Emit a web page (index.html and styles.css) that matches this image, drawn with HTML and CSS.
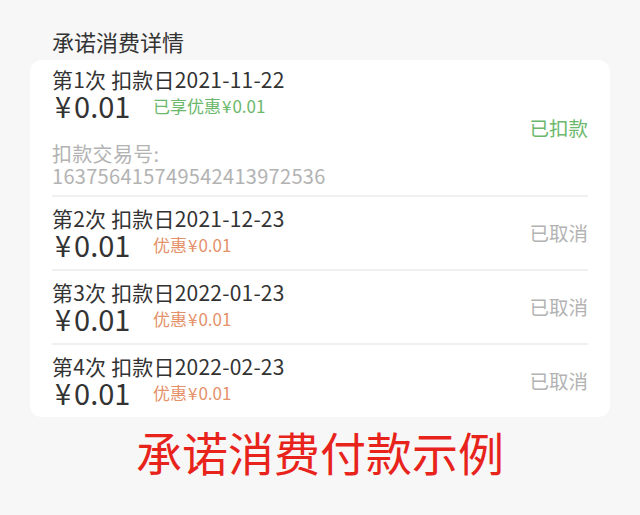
FILE: index.html
```html
<!DOCTYPE html>
<html lang="zh-CN">
  <head>
    <meta charset="UTF-8" />
    <meta name="viewport" content="width=device-width, initial-scale=1.0" />
    <title>承诺消费详情</title>
    <link rel="stylesheet" href="styles.css">
  </head>
  <body>
    <h2 class="page-title">承诺消费详情</h2>

    <!-- Payment list -->
    <div class="card">
      <div class="row row-first">
        <div class="info">
          <div class="date">第1次 扣款日2021-11-22</div>
          <div class="amount-line">
            <span class="amount"><span class="yen">¥</span>0.01</span>
            <span class="discount done">已享优惠<span class="yen-small">¥</span>0.01</span>
          </div>
          <div class="trade">
            <div>扣款交易号:</div>
            <div>163756415749542413972536</div>
          </div>
        </div>
        <div class="status paid">已扣款</div>
      </div>

      <div class="row">
        <div class="info">
          <div class="date">第2次 扣款日2021-12-23</div>
          <div class="amount-line">
            <span class="amount"><span class="yen">¥</span>0.01</span>
            <span class="discount">优惠<span class="yen-small">¥</span>0.01</span>
          </div>
        </div>
        <div class="status">已取消</div>
      </div>

      <div class="row">
        <div class="info">
          <div class="date">第3次 扣款日2022-01-23</div>
          <div class="amount-line">
            <span class="amount"><span class="yen">¥</span>0.01</span>
            <span class="discount">优惠<span class="yen-small">¥</span>0.01</span>
          </div>
        </div>
        <div class="status">已取消</div>
      </div>

      <div class="row row-last">
        <div class="info">
          <div class="date">第4次 扣款日2022-02-23</div>
          <div class="amount-line">
            <span class="amount"><span class="yen">¥</span>0.01</span>
            <span class="discount">优惠<span class="yen-small">¥</span>0.01</span>
          </div>
        </div>
        <div class="status">已取消</div>
      </div>
    </div>

    <div class="caption">承诺消费付款示例</div>
  </body>
</html>
```

FILE: styles.css
```css
:root {
  --page-bg: #f7f7f7;
  --card-bg: #fff;
  --text-dark: #333;
  --text-gray: #b3b3b3;
  --green: #6cb86c;
  --orange: #e5916a;
  --line: #f0f0f0;
  --red: #e8231b;
}

body {
  margin: 0;
  padding-top: 26px;
  background: var(--page-bg);
  color: var(--text-dark);
  font-family: "Noto Sans CJK SC", "Noto Sans", sans-serif;
}

.page-title {
  margin: 0 0 4px 52px;
  font-size: 22px;
  font-weight: normal;
  line-height: 30px;
}

.card {
  margin: 0 30px;
  background: var(--card-bg);
  border-radius: 12px;
}

.row {
  margin: 0 22px;
  padding: 9px 0 11px;
  display: flex;
  align-items: center;
  justify-content: space-between;
  border-bottom: 2px solid var(--line);
}

.row-first {
  padding: 7px 0 8px;
}

.row-last {
  border-bottom: none;
}

.date {
  font-size: 21px;
  line-height: 24px;
  letter-spacing: 0.2px;
}

.amount-line {
  display: flex;
  align-items: center;
  height: 28px;
}

.amount {
  font-size: 29px;
  line-height: 28px;
  width: 98px;
  padding-left: 3px;
}

.yen {
  margin-right: 3px;
}

.yen-small {
  margin: 0 1px;
}

.discount {
  font-size: 17px;
  color: var(--orange);
}

.discount.done {
  color: var(--green);
}

.trade {
  margin-top: 24px;
  font-size: 20px;
  line-height: 22px;
  color: var(--text-gray);
  letter-spacing: 0.3px;
}

.status {
  font-size: 19.5px;
  color: var(--text-gray);
}

.status.paid {
  color: var(--green);
}

.caption {
  margin-top: 6px;
  text-align: center;
  font-size: 46px;
  line-height: 56px;
  color: var(--red);
}
```
